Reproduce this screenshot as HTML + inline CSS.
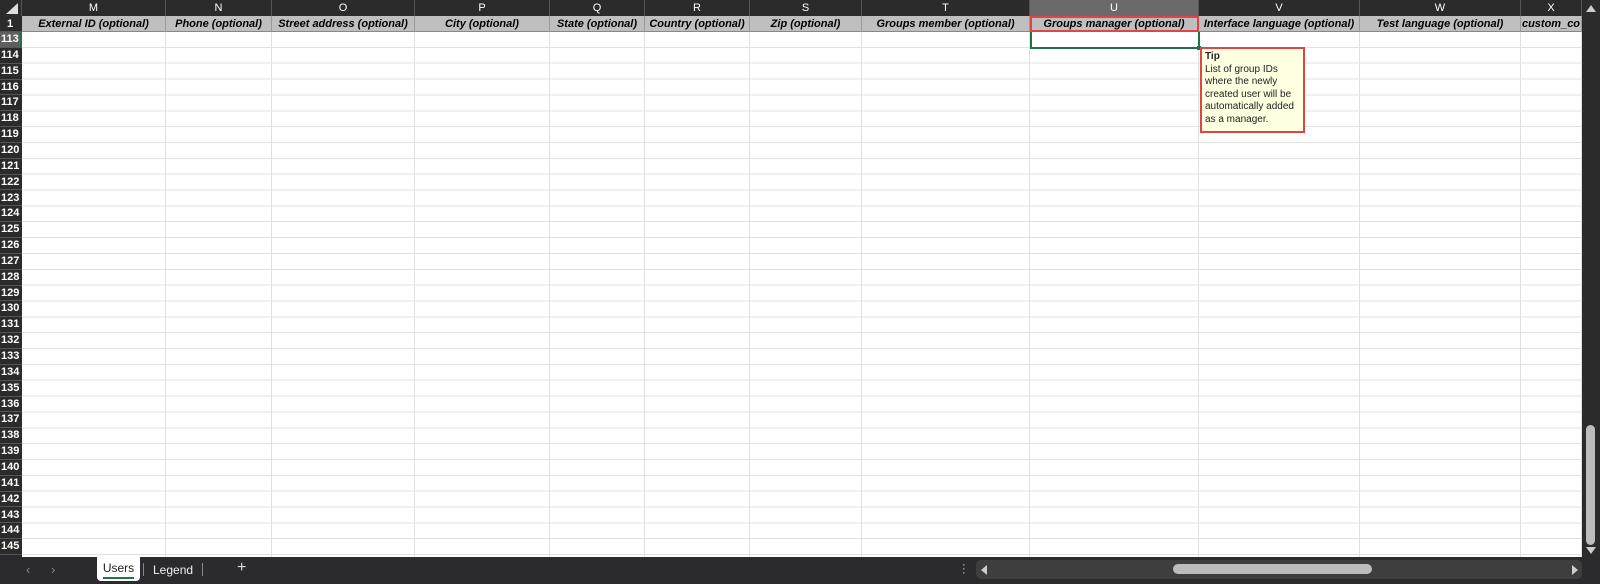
<!DOCTYPE html>
<html><head><style>
*{margin:0;padding:0;box-sizing:border-box}
body{width:1600px;height:584px;overflow:hidden;background:#2b2a2e;font-family:"Liberation Sans",sans-serif;position:relative}
.abs{position:absolute}
#grid{left:22px;top:32px;width:1560px;height:525px;background-color:#fff;background-image:repeating-linear-gradient(to bottom,transparent 0,transparent 14.85px,#e1e1e1 14.85px,#e1e1e1 15.85px)}
.vl{position:absolute;top:32px;height:525px;width:1px;background:#e1e1e1}
.ch{position:absolute;top:0;height:16px;background:#2b2b2b;color:#fff;font-size:11px;text-align:center;line-height:16px;border-right:1px solid #555}
.h1{position:absolute;top:16px;height:16px;background:#bfbfbf;color:#000;font-size:11px;font-weight:bold;font-style:italic;text-align:center;line-height:16px;border-right:1px solid #9a9a9a;border-bottom:1px solid #888;white-space:nowrap;overflow:hidden}
.rh{position:absolute;left:0;width:22px;background:#2b2b2b;color:#fff;font-size:11px;font-weight:bold;text-align:left;padding-left:1px;border-bottom:1px solid #555}
</style></head><body>
<div class="abs" id="grid"></div>
<div class="abs" style="left:0;top:0;width:22px;height:16px;background:#2b2b2b;border-right:1px solid #555"></div>
<svg class="abs" style="left:6px;top:3px" width="12" height="11"><polygon points="12,0 12,11 0,11" fill="#ddd"/></svg>
<div id="cols"></div>
<div class="abs" style="left:1030px;top:16px;width:169px;height:16px;border:2px solid #e04545"></div>
<div class="abs" style="left:1030px;top:32px;width:170px;height:17px;border:2px solid #217346;border-top:none"></div>
<div class="abs" style="left:1197px;top:46px;width:4px;height:4px;background:#217346"></div>
<div class="abs" style="left:1200px;top:47px;width:105px;height:86px;background:#ffffe1;border:2px solid #e04545;font-family:'Liberation Sans',sans-serif;font-size:10px;line-height:12.5px;padding:2px 3px;color:#222">
<b>Tip</b><br>List of group IDs<br>where the newly<br>created user will be<br>automatically added<br>as a manager.</div>
<div class="abs" style="left:1582px;top:0;width:18px;height:557px;background:#2b2b2b"></div>
<svg class="abs" style="left:1585px;top:4px" width="12" height="10"><polygon points="6,1 11,8 1,8" fill="#ccc"/></svg>
<div class="abs" style="left:1586px;top:425px;width:9px;height:120px;background:#bdbdbd;border-radius:5px"></div>
<svg class="abs" style="left:1585px;top:546px" width="12" height="10"><polygon points="1,1 11,1 6,8" fill="#ccc"/></svg>
<div class="abs" style="left:26px;top:562px;color:#888;font-size:13px">&#8249;</div>
<div class="abs" style="left:51px;top:562px;color:#888;font-size:13px">&#8250;</div>
<div class="abs" style="left:97px;top:557px;width:43px;height:24px;background:#fff;border-radius:0 0 4px 4px;font-size:12px;text-align:center;line-height:22px;color:#222">Users<div style="position:absolute;left:6px;right:6px;bottom:2px;height:2px;background:#217346"></div></div>
<div class="abs" style="left:143px;top:563px;width:1px;height:13px;background:#888"></div>
<div class="abs" style="left:153px;top:563px;color:#eee;font-size:12px">Legend</div>
<div class="abs" style="left:202px;top:563px;width:1px;height:13px;background:#888"></div>
<div class="abs" style="left:237px;top:559px;color:#ddd;font-size:16px">+</div>
<div class="abs" style="left:962px;top:563px;color:#ddd;font-size:11px;line-height:4px">·<br>·<br>·</div>
<div class="abs" style="left:976px;top:560px;width:606px;height:19px;background:#3e3e3e;border-radius:5px"></div>
<svg class="abs" style="left:979px;top:564px" width="10" height="12"><polygon points="8,1 8,11 2,6" fill="#ccc"/></svg>
<svg class="abs" style="left:1570px;top:564px" width="10" height="12"><polygon points="2,1 2,11 8,6" fill="#ccc"/></svg>
<div class="abs" style="left:1173px;top:564px;width:199px;height:10px;background:#bdbdbd;border-radius:5px"></div>
<script>
var c=[["M",22,166,"External ID (optional)"],["N",166,272,"Phone (optional)"],["O",272,415,"Street address (optional)"],["P",415,550,"City (optional)"],["Q",550,645,"State (optional)"],["R",645,750,"Country (optional)"],["S",750,862,"Zip (optional)"],["T",862,1030,"Groups member (optional)"],["U",1030,1199,"Groups manager (optional)"],["V",1199,1360,"Interface language (optional)"],["W",1360,1521,"Test language (optional)"],["X",1521,1582,"custom_co"]];
var h="";
c.forEach(function(a){var w=a[2]-a[1];
h+='<div class="ch" style="left:'+a[1]+'px;width:'+w+'px;'+(a[0]=="U"?'background:#6a6a6a;':'')+'">'+a[0]+'</div>';
h+='<div class="h1" style="left:'+a[1]+'px;width:'+w+'px">'+a[3]+'</div>';
h+='<div class="vl" style="left:'+(a[2]-1)+'px"></div>';});
h+='<div class="rh" style="top:16px;height:16px;line-height:16px;padding-left:7px">1</div>';
for(var i=0;i<33;i++){var t=32+i*15.85;
h+='<div class="rh" style="top:'+t+'px;height:15.85px;line-height:15px;'+(i==0?'background:#5e5e5e;border-right:2px solid #217346;':'')+'">'+(113+i)+'</div>';}
document.getElementById("cols").innerHTML=h;
</script>
</body></html>
